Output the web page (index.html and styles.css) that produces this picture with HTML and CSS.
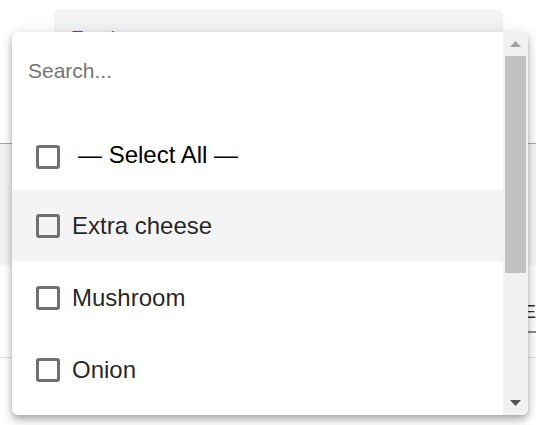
FILE: index.html
```html
<!DOCTYPE html>
<html lang="en">
<head>
<meta charset="utf-8">
<title>Toppings select</title>
<link rel="stylesheet" href="styles.css">
</head>
<body>
<div class="page">
  <div class="top-field"><span class="float-label">Toppings</span></div>
  <div class="rule"></div>
  <div class="band"></div>
  <div class="lower">
    <div class="side-field">Edit</div>
  </div>
  <div class="rule light"></div>

  <div class="panel">
    <div class="list">
      <div class="search">Search...</div>
      <div class="option select-all">
        <span class="box"></span><span class="label">— Select All —</span>
      </div>
      <div class="option active">
        <span class="box"></span><span class="label">Extra cheese</span>
      </div>
      <div class="option">
        <span class="box"></span><span class="label">Mushroom</span>
      </div>
      <div class="option">
        <span class="box"></span><span class="label">Onion</span>
      </div>
    </div>
    <div class="scrollbar">
      <div class="sb-btn">
        <svg width="11" height="6" viewBox="0 0 11 6"><polygon points="0,6 5.5,0 11,6" fill="#a3a3a3"/></svg>
      </div>
      <div class="sb-track"><div class="sb-thumb"></div></div>
      <div class="sb-btn">
        <svg width="11" height="6" viewBox="0 0 11 6"><polygon points="0,0 11,0 5.5,6" fill="#505050"/></svg>
      </div>
    </div>
  </div>
</div>
</body>
</html>
```
FILE: styles.css
```css
html, body {
  margin: 0;
  padding: 0;
  background: #ffffff;
}
body {
  width: 536px;
  height: 425px;
  overflow: hidden;
  font-family: "Liberation Sans", Arial, sans-serif;
}
.page {
  position: relative;
  width: 536px;
  height: 425px;
  overflow: hidden;
  padding-top: 9px;
  box-sizing: border-box;
}
.top-field {
  margin-left: 54px;
  width: 449px;
  height: 134px;
  box-sizing: border-box;
  padding: 19px 18px 0;
  background: #f3f3f3;
  border-radius: 6px 6px 0 0;
}
.float-label {
  font-size: 18px;
  line-height: 21px;
  color: #673ab7;
}
.rule {
  height: 1px;
  background: #a8a8a8;
}
.rule.light {
  background: #e0e0e0;
}
.band {
  height: 121px;
  background: #f5f5f5;
}
.lower {
  height: 92px;
  display: flex;
}
.side-field {
  margin-left: 524px;
  margin-top: 37px;
  padding-bottom: 8px;
  height: 21px;
  width: 120px;
  font-size: 18px;
  line-height: 21px;
  color: #333333;
  border-bottom: 2px solid #8a8a8a;
  white-space: nowrap;
}

.panel {
  position: absolute;
  left: 12px;
  top: 32px;
  width: 516px;
  height: 383px;
  display: flex;
  background: #ffffff;
  border-radius: 6px;
  overflow: hidden;
  box-shadow: 0 3px 6px -1.5px rgba(0,0,0,.2), 0 6px 8px 0 rgba(0,0,0,.14), 0 1.5px 15px 0 rgba(0,0,0,.12);
}
.list {
  flex: 1;
  overflow: hidden;
}
.search {
  height: 86px;
  box-sizing: border-box;
  padding: 27px 16px 0;
  font-size: 21px;
  line-height: 24px;
  color: #757575;
}
.option {
  height: 72px;
  box-sizing: border-box;
  display: flex;
  align-items: center;
  gap: 12px;
  padding-left: 24px;
  font-size: 24px;
  color: rgba(0,0,0,.87);
}
.option.active {
  background: #f4f4f4;
}
.option.select-all {
  padding-top: 5px;
  color: #000000;
}
.option.select-all .label {
  margin-left: 6px;
  margin-bottom: 4px;
}
.box {
  width: 24px;
  height: 24px;
  box-sizing: border-box;
  border: 3px solid #707070;
  border-radius: 3px;
  flex: none;
}

.scrollbar {
  width: 25px;
  flex: none;
  display: flex;
  flex-direction: column;
  background: #f1f1f1;
}
.sb-btn {
  height: 24px;
  flex: none;
  display: flex;
  align-items: center;
  justify-content: center;
}
.sb-btn svg {
  display: block;
}
.sb-track {
  flex: 1;
}
.sb-thumb {
  margin: 0 2px;
  height: 217px;
  background: #c1c1c1;
}
```
